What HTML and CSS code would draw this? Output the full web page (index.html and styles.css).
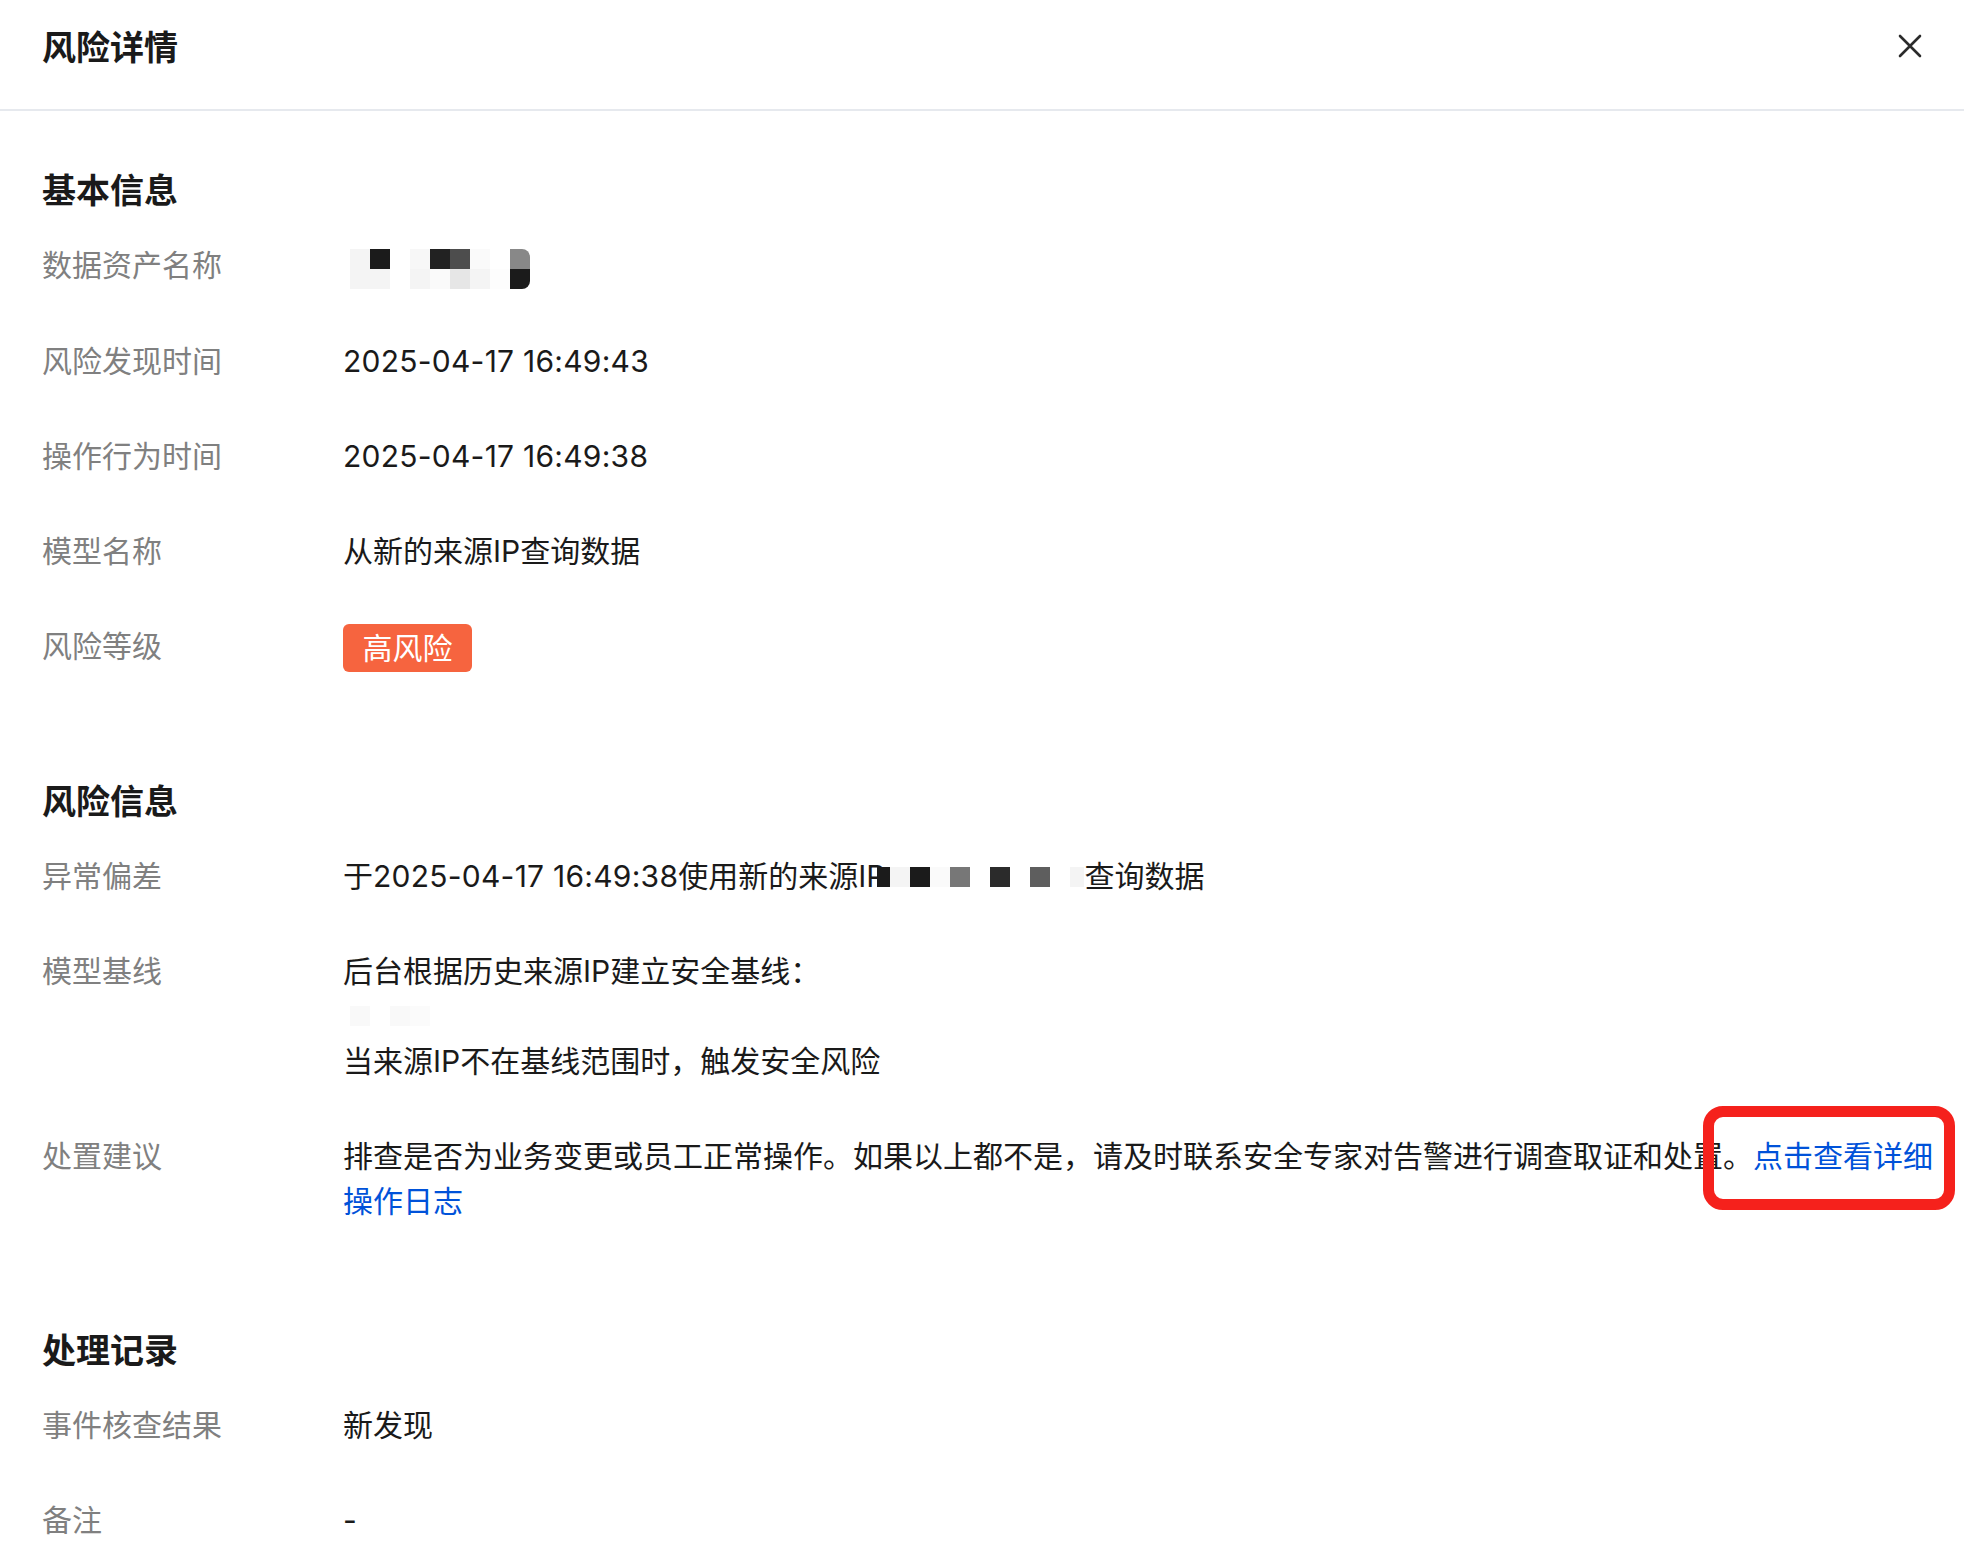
FILE: index.html
```html
<!DOCTYPE html>
<html lang="zh-CN">
<head>
<meta charset="utf-8">
<title>风险详情</title>
<link rel="stylesheet" href="styles.css">
</head>
<body>
<div class="drawer">
  <header class="drawer-header">
    <h1 class="drawer-title">风险详情</h1>
    <button class="close-btn" aria-label="关闭">
      <svg width="24" height="24" viewBox="0 0 24 24" fill="none" stroke="#2b2b2b" stroke-width="2.6" stroke-linecap="round">
        <path d="M2 2 L22 22 M22 2 L2 22"/>
      </svg>
    </button>
  </header>

  <main class="drawer-body">
    <section class="section section-basic">
      <h2 class="section-title">基本信息</h2>
      <dl class="fields">
        <div class="field">
          <dt class="label">数据资产名称</dt>
          <dd class="value">
            <span class="mosaic mosaic-name">
              <i class="px l1"></i><i class="px k1"></i><i class="px w"></i><i class="px l3"></i><i class="px k2"></i><i class="px g4"></i><i class="px l2"></i><i class="px w"></i><i class="px g8 tr"></i>
              <i class="px l1"></i><i class="px l1"></i><i class="px w"></i><i class="px l1"></i><i class="px l2"></i><i class="px l4"></i><i class="px l1"></i><i class="px l5"></i><i class="px k1 br"></i>
            </span>
          </dd>
        </div>
        <div class="field">
          <dt class="label">风险发现时间</dt>
          <dd class="value"><span class="num">2025-04-17 16:49:43</span></dd>
        </div>
        <div class="field">
          <dt class="label">操作行为时间</dt>
          <dd class="value"><span class="num">2025-04-17 16:49:38</span></dd>
        </div>
        <div class="field">
          <dt class="label">模型名称</dt>
          <dd class="value">从新的来源IP查询数据</dd>
        </div>
        <div class="field">
          <dt class="label">风险等级</dt>
          <dd class="value"><span class="badge-high">高风险</span></dd>
        </div>
      </dl>
    </section>

    <section class="section">
      <h2 class="section-title">风险信息</h2>
      <dl class="fields">
        <div class="field">
          <dt class="label">异常偏差</dt>
          <dd class="value">于<span class="num">2025-04-17 16:49:38</span>使用新的来源IP<span class="mosaic mosaic-ip"><i class="px k1"></i><i class="px l1"></i><i class="px k1"></i><i class="px l2"></i><i class="px g7"></i><i class="px w"></i><i class="px k3"></i><i class="px w"></i><i class="px g5"></i><i class="px w"></i><i class="px l1"></i></span>查询数据</dd>
        </div>
        <div class="field">
          <dt class="label">模型基线</dt>
          <dd class="value">
            <div class="line">后台根据历史来源IP建立安全基线：</div>
            <div class="line"><span class="mosaic mosaic-faint"><i class="px f1"></i><i class="px w"></i><i class="px f1"></i><i class="px f2"></i></span></div>
            <div class="line">当来源IP不在基线范围时，触发安全风险</div>
          </dd>
        </div>
        <div class="field">
          <dt class="label">处置建议</dt>
          <dd class="value">排查是否为业务变更或员工正常操作。如果以上都不是，请及时联系安全专家对告警进行调查取证和处置。<a class="link" href="#">点击查看详细操作日志</a></dd>
        </div>
      </dl>
    </section>

    <section class="section">
      <h2 class="section-title">处理记录</h2>
      <dl class="fields">
        <div class="field">
          <dt class="label">事件核查结果</dt>
          <dd class="value">新发现</dd>
        </div>
        <div class="field">
          <dt class="label">备注</dt>
          <dd class="value">-</dd>
        </div>
      </dl>
    </section>
  </main>

  <div class="annotation"></div>
</div>
</body>
</html>
```

FILE: styles.css
```css
* {
  box-sizing: border-box;
}

html, body {
  margin: 0;
  padding: 0;
  background: #ffffff;
}

body {
  width: 1964px;
  height: 1556px;
  overflow: hidden;
  font-family: Inter, "Noto Sans CJK SC", "Noto Sans", sans-serif;
  color: #1a1a1a;
}

.drawer {
  position: relative;
  width: 1964px;
  height: 1556px;
}

.drawer-header {
  display: flex;
  align-items: center;
  justify-content: space-between;
  padding: 22px 42px 39px 42px;
  border-bottom: 2px solid #e6e9ee;
}

.drawer-title {
  margin: 0;
  font-size: 34px;
  line-height: 48px;
  font-weight: 700;
  font-family: "Noto Sans CJK SC", sans-serif;
  color: #1a1a1a;
}

.close-btn {
  display: flex;
  align-items: center;
  justify-content: center;
  width: 24px;
  height: 24px;
  padding: 0;
  border: 0;
  background: none;
  cursor: pointer;
}

.drawer-body {
  display: flex;
  flex-direction: column;
  gap: 101px;
  padding: 54px 20px 0 42px;
}

.section-basic {
  margin-bottom: 3px;
}

.section-title {
  margin: 0 0 30px;
  font-size: 34px;
  line-height: 48px;
  font-weight: 700;
  font-family: "Noto Sans CJK SC", sans-serif;
  color: #1a1a1a;
}

.fields {
  display: flex;
  flex-direction: column;
  gap: 50px;
  margin: 0;
}

.field {
  display: flex;
  align-items: flex-start;
}

.label {
  flex: 0 0 301px;
  margin: 0;
  font-size: 30px;
  line-height: 45px;
  color: #808080;
}

.value {
  flex: 1;
  min-width: 0;
  margin: 0;
  font-size: 30px;
  line-height: 45px;
  color: #1a1a1a;
}

.num {
  letter-spacing: 0.25px;
}

.line {
  height: 45px;
  display: flex;
  align-items: center;
}

.link {
  color: #0052d9;
  text-decoration: none;
}

.badge-high {
  display: inline-flex;
  align-items: center;
  justify-content: center;
  width: 129px;
  height: 48px;
  border-radius: 6px;
  background: #f6643f;
  color: #ffffff;
  font-size: 30px;
  line-height: 48px;
  vertical-align: top;
}

/* pixelated placeholders */
.mosaic {
  display: inline-grid;
  grid-auto-rows: 20px;
  vertical-align: middle;
}

.mosaic-name {
  grid-template-columns: repeat(9, 20px);
  margin: 2px 0 0 7px;
}

.mosaic-ip {
  grid-template-columns: 13px repeat(9, 20px) 14px;
  margin: -4px 0 0 -8px;
}

.mosaic-faint {
  grid-template-columns: repeat(4, 20px);
  margin-left: 7px;
}

.px { display: block; }
.px.w  { background: transparent; }
.px.k1 { background: #1b1b1b; }
.px.k2 { background: #222222; }
.px.k3 { background: #2b2b2b; }
.px.g4 { background: #4d4d4d; }
.px.g5 { background: #5e5e5e; }
.px.g7 { background: #777777; }
.px.g8 { background: #888888; }
.px.l1 { background: #f4f4f4; }
.px.l2 { background: #fafafa; }
.px.l3 { background: #f7f7f7; }
.px.l4 { background: #e6e6e6; }
.px.l5 { background: #fdfdfd; }
.px.f1 { background: #f9f9f9; }
.px.f2 { background: #fbfbfb; }
.px.tr { border-top-right-radius: 8px; }
.px.br { border-bottom-right-radius: 8px; }

/* red highlight annotation drawn over the screenshot */
.annotation {
  position: absolute;
  top: 1106px;
  left: 1703px;
  width: 252px;
  height: 104px;
  border: 11px solid #f5211c;
  border-radius: 20px;
  pointer-events: none;
}
```
